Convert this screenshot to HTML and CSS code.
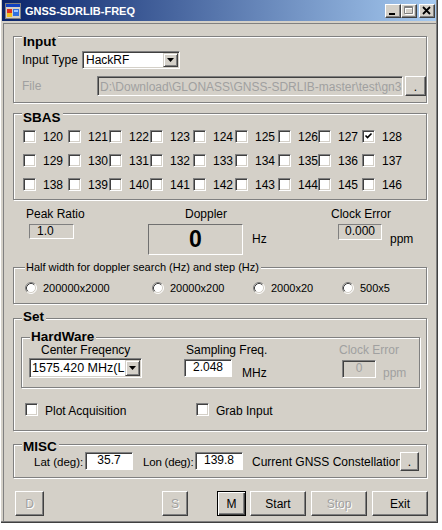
FILE: index.html
```html
<!DOCTYPE html>
<html>
<head>
<meta charset="utf-8">
<title>GNSS-SDRLIB-FREQ</title>
<link rel="stylesheet" href="styles.css">
</head>
<body>
<div class="window">
  <div class="titlebar">
    <svg class="appicon" width="16" height="16" viewBox="0 0 16 16">
      <rect x="0.5" y="0.5" width="15" height="15" fill="#d4d0c8" stroke="#808080"/>
      <rect x="1" y="1" width="14" height="3" fill="#1040c0"/>
      <rect x="2" y="6" width="5" height="4" fill="#e03020"/>
      <rect x="2" y="10" width="5" height="4" fill="#f0c020"/>
      <rect x="8" y="6" width="6" height="7" fill="#3070e0"/>
      <rect x="9" y="7" width="4" height="2" fill="#a0c8ff"/>
    </svg>
    <span class="title">GNSS-SDRLIB-FREQ</span>
    <span class="capbtns">
      <span class="capbtn"><svg width="14" height="12" viewBox="0 0 14 12"><rect x="3" y="8" width="6" height="2" fill="#000"/></svg></span>
      <span class="capbtn"><svg width="14" height="12" viewBox="0 0 14 12"><path d="M3.5 2.5h8v7h-8zM3.5 3.5h8" fill="none" stroke="#fff"/><path d="M2.5 1.5h8v7h-8zM2.5 2.5h8" fill="none" stroke="#808080"/></svg></span>
      <span class="capbtn close"><svg width="14" height="12" viewBox="0 0 14 12"><path d="M3 2l7 7M10 2l-7 7" stroke="#000" stroke-width="1.8"/></svg></span>
    </span>
  </div>

  <div class="client">
    <div class="group g-input">
      <span class="gtitle">Input</span>
      <div class="row r-type">
        <span class="l-type">Input Type</span>
        <div class="combo c-type"><span class="val">HackRF</span><span class="dd"><svg width="7" height="4" viewBox="0 0 7 4"><path d="M0 0h7L3.5 4z" fill="#000"/></svg></span></div>
      </div>
      <div class="row r-file">
        <span class="l-file dis">File</span>
        <div class="tb-file dis">D:\Download\GLONASS\GNSS-SDRLIB-master\test\gn3</div>
        <span class="btn btn-dots">.</span>
      </div>
    </div>

    <div class="group g-sbas">
      <span class="gtitle">SBAS</span>
      <div class="sbas">
        <label class="chk"><span class="cb"></span><span class="t">120</span></label>
        <label class="chk"><span class="cb"></span><span class="t">121</span></label>
        <label class="chk"><span class="cb"></span><span class="t">122</span></label>
        <label class="chk"><span class="cb"></span><span class="t">123</span></label>
        <label class="chk"><span class="cb"></span><span class="t">124</span></label>
        <label class="chk"><span class="cb"></span><span class="t">125</span></label>
        <label class="chk"><span class="cb"></span><span class="t">126</span></label>
        <label class="chk"><span class="cb"></span><span class="t">127</span></label>
        <label class="chk"><span class="cb"><svg width="9" height="9" viewBox="0 0 9 9"><path d="M1.5 3.5l2 2 4-4" fill="none" stroke="#000" stroke-width="1.6"/></svg></span><span class="t">128</span></label>
        <label class="chk"><span class="cb"></span><span class="t">129</span></label>
        <label class="chk"><span class="cb"></span><span class="t">130</span></label>
        <label class="chk"><span class="cb"></span><span class="t">131</span></label>
        <label class="chk"><span class="cb"></span><span class="t">132</span></label>
        <label class="chk"><span class="cb"></span><span class="t">133</span></label>
        <label class="chk"><span class="cb"></span><span class="t">134</span></label>
        <label class="chk"><span class="cb"></span><span class="t">135</span></label>
        <label class="chk"><span class="cb"></span><span class="t">136</span></label>
        <label class="chk"><span class="cb"></span><span class="t">137</span></label>
        <label class="chk"><span class="cb"></span><span class="t">138</span></label>
        <label class="chk"><span class="cb"></span><span class="t">139</span></label>
        <label class="chk"><span class="cb"></span><span class="t">140</span></label>
        <label class="chk"><span class="cb"></span><span class="t">141</span></label>
        <label class="chk"><span class="cb"></span><span class="t">142</span></label>
        <label class="chk"><span class="cb"></span><span class="t">143</span></label>
        <label class="chk"><span class="cb"></span><span class="t">144</span></label>
        <label class="chk"><span class="cb"></span><span class="t">145</span></label>
        <label class="chk"><span class="cb"></span><span class="t">146</span></label>
      </div>
    </div>

    <div class="meas">
      <div class="m-labels">
        <span class="ml-peak">Peak Ratio</span>
        <span class="ml-dop">Doppler</span>
        <span>Clock Error</span>
      </div>
      <div class="m-boxes">
        <span class="vbox vb-peak">1.0</span>
        <span class="vbox vb-dop">0</span>
        <span class="u-hz">Hz</span>
        <span class="vbox vb-clk">0.000</span>
        <span class="u-ppm">ppm</span>
      </div>
    </div>

    <div class="group g-half">
      <span class="gtitle small">Half width for doppler search (Hz) and step (Hz)</span>
      <div class="radios">
        <label class="rad r1"><svg class="rb" width="12" height="12" viewBox="0 0 12 12"><circle cx="6" cy="6" r="5" fill="#fff"/><path d="M2.11 9.89A5.5 5.5 0 0 1 9.89 2.11" fill="none" stroke="#808080"/><path d="M2.82 9.18A4.5 4.5 0 0 1 9.18 2.82" fill="none" stroke="#404040"/><path d="M9.89 2.11A5.5 5.5 0 0 1 2.11 9.89" fill="none" stroke="#fff"/><path d="M9.18 2.82A4.5 4.5 0 0 1 2.82 9.18" fill="none" stroke="#d4d0c8"/></svg><span class="t">200000x2000</span></label>
        <label class="rad r2"><svg class="rb" width="12" height="12" viewBox="0 0 12 12"><circle cx="6" cy="6" r="5" fill="#fff"/><path d="M2.11 9.89A5.5 5.5 0 0 1 9.89 2.11" fill="none" stroke="#808080"/><path d="M2.82 9.18A4.5 4.5 0 0 1 9.18 2.82" fill="none" stroke="#404040"/><path d="M9.89 2.11A5.5 5.5 0 0 1 2.11 9.89" fill="none" stroke="#fff"/><path d="M9.18 2.82A4.5 4.5 0 0 1 2.82 9.18" fill="none" stroke="#d4d0c8"/></svg><span class="t">20000x200</span></label>
        <label class="rad r3"><svg class="rb" width="12" height="12" viewBox="0 0 12 12"><circle cx="6" cy="6" r="5" fill="#fff"/><path d="M2.11 9.89A5.5 5.5 0 0 1 9.89 2.11" fill="none" stroke="#808080"/><path d="M2.82 9.18A4.5 4.5 0 0 1 9.18 2.82" fill="none" stroke="#404040"/><path d="M9.89 2.11A5.5 5.5 0 0 1 2.11 9.89" fill="none" stroke="#fff"/><path d="M9.18 2.82A4.5 4.5 0 0 1 2.82 9.18" fill="none" stroke="#d4d0c8"/></svg><span class="t">2000x20</span></label>
        <label class="rad"><svg class="rb" width="12" height="12" viewBox="0 0 12 12"><circle cx="6" cy="6" r="5" fill="#fff"/><path d="M2.11 9.89A5.5 5.5 0 0 1 9.89 2.11" fill="none" stroke="#808080"/><path d="M2.82 9.18A4.5 4.5 0 0 1 9.18 2.82" fill="none" stroke="#404040"/><path d="M9.89 2.11A5.5 5.5 0 0 1 2.11 9.89" fill="none" stroke="#fff"/><path d="M9.18 2.82A4.5 4.5 0 0 1 2.82 9.18" fill="none" stroke="#d4d0c8"/></svg><span class="t">500x5</span></label>
      </div>
    </div>

    <div class="group g-set">
      <span class="gtitle">Set</span>
      <div class="group g-hw">
        <span class="gtitle">HardWare</span>
        <div class="hw-labels">
          <span class="hl-freq">Center Freqency</span>
          <span class="hl-samp">Sampling Freq.</span>
          <span class="dis">Clock Error</span>
        </div>
        <div class="hw-ctrls">
          <div class="combo c-freq"><span class="val">1575.420 MHz(L</span><span class="dd"><svg width="7" height="4" viewBox="0 0 7 4"><path d="M0 0h7L3.5 4z" fill="#000"/></svg></span></div>
          <span class="tb tb-samp">2.048</span>
          <span class="u-mhz">MHz</span>
          <span class="tb tb-clk dis">0</span>
          <span class="u-ppm2 dis">ppm</span>
        </div>
      </div>
      <div class="plot-row">
        <label class="chk c-plot"><span class="cb"></span><span class="t">Plot Acquisition</span></label>
        <label class="chk"><span class="cb"></span><span class="t">Grab Input</span></label>
      </div>
    </div>

    <div class="group g-misc">
      <span class="gtitle">MISC</span>
      <div class="misc-row">
        <span class="m-lat">Lat (deg):</span>
        <span class="tb tb-lat">35.7</span>
        <span class="m-lon">Lon (deg):</span>
        <span class="tb tb-lon">139.8</span>
        <span class="m-cur">Current GNSS Constellation</span>
        <span class="btn btn-const">.</span>
      </div>
    </div>

    <div class="btnrow">
      <span class="btn b-d disabled">D</span>
      <span class="btn b-s disabled">S</span>
      <span class="btn b-m def">M</span>
      <span class="btn b-wide b-start">Start</span>
      <span class="btn b-wide b-next disabled">Stop</span>
      <span class="btn b-wide b-next">Exit</span>
    </div>
  </div>
</div>
</body>
</html>
```

FILE: styles.css
```css
* { box-sizing: border-box; margin: 0; padding: 0; }

body {
  margin: 0;
  background: #fff;
  font-family: "Liberation Sans", Arial, sans-serif;
  font-size: 12px;
  line-height: 14px;
  color: #000;
}

.window {
  width: 438px;
  height: 523px;
  background: #d4d0c8;
  padding: 0 2px 2px 2px;
  box-shadow: inset 1px 0 0 #fff, inset -1px -1px 0 #404040, inset -2px -2px 0 #808080;
  display: flex;
  flex-direction: column;
  white-space: nowrap;
}

/* title bar */
.titlebar {
  height: 21px;
  flex: none;
  display: flex;
  align-items: center;
  padding: 0 1px 0 3px;
  background: linear-gradient(90deg, #0a246a 0%, #a6caf0 100%);
}
.appicon { flex: none; }
.title {
  flex: 1;
  margin-left: 4px;
  color: #fff;
  font-weight: bold;
  font-size: 11px;
}
.capbtns { display: flex; }
.capbtn {
  width: 16px;
  height: 14px;
  background: #d4d0c8;
  border: 1px solid;
  border-color: #fff #404040 #404040 #fff;
  box-shadow: inset -1px -1px 0 #808080;
  display: flex;
}
.capbtn.close { margin-left: 2px; }

/* client area */
.client {
  flex: 1;
  margin: 2px 0 0 1px;
  border-top: 1px solid #808080;
  border-left: 1px solid #808080;
  padding-left: 9px;
  display: flex;
  flex-direction: column;
  align-items: flex-start;
}

.dis { color: #a0a0a0; }

.group {
  position: relative;
  flex: none;
  width: 414px;
  border: 1px solid #808080;
  box-shadow: inset 1px 1px 0 #fff, 1px 1px 0 #fff;
}
.gtitle {
  position: absolute;
  left: 8px;
  top: -6px;
  padding: 0 2px 0 1px;
  background: #d4d0c8;
  font-weight: bold;
  font-size: 13.5px;
  line-height: 15px;
}
.g-input > .gtitle { top: -3px; }
.g-sbas > .gtitle { top: -4px; }
.g-set > .gtitle { top: -10px; }
.g-hw > .gtitle { top: -9px; }
.g-misc > .gtitle { top: -6px; }
.gtitle.small {
  left: 11px;
  top: -7px;
  font-weight: normal;
  font-size: 11px;
  line-height: 13px;
}

.row { display: flex; align-items: center; }

/* input */
.g-input { margin-top: 12px; height: 67px; padding: 14px 0 0 8px; }
.r-type { height: 18px; }
.r-file { height: 20px; margin-top: 7px; }
.l-type { width: 60px; }
.l-file { width: 75px; }

.combo {
  display: flex;
  align-items: center;
  background: #fff;
  border: 1px solid;
  border-color: #808080 #fff #fff #808080;
  box-shadow: inset 1px 1px 0 #404040, inset -1px -1px 0 #d4d0c8;
}
.combo .val { flex: 1; overflow: hidden; padding-left: 3px; }
.c-type { width: 98px; height: 18px; }
.dd {
  flex: none;
  width: 15px;
  height: 14px;
  margin-right: 1px;
  background: #d4d0c8;
  border: 1px solid;
  border-color: #d4d0c8 #404040 #404040 #d4d0c8;
  box-shadow: inset 1px 1px 0 #fff, inset -1px -1px 0 #808080;
  display: flex;
  align-items: center;
  justify-content: center;
}

.tb-file {
  width: 306px;
  height: 20px;
  background: #d4d0c8;
  border: 1px solid;
  border-color: #808080 #fff #fff #808080;
  box-shadow: inset 1px 1px 0 #404040;
  padding: 3px 0 0 2px;
  overflow: hidden;
}

.btn {
  display: flex;
  align-items: center;
  justify-content: center;
  background: #d4d0c8;
  border: 1px solid;
  border-color: #fff #404040 #404040 #fff;
  box-shadow: inset -1px -1px 0 #808080;
  flex: none;
}
.btn.disabled { color: #a0a0a0; text-shadow: 1px 1px 0 #fff; }
.btn.def {
  border-color: #000;
  box-shadow: inset 1px 1px 0 #fff, inset -1px -1px 0 #404040, inset -2px -2px 0 #808080;
}
.btn-dots {
  width: 21px;
  height: 20px;
  margin-left: 2px;
  align-items: flex-end;
  padding-bottom: 1px;
}

/* sbas */
.g-sbas { margin-top: 10px; height: 87px; }
.sbas {
  display: grid;
  grid-template-columns: 45px 41px 41px 43px 42px 43px 40px 44px 40px;
  row-gap: 11px;
  padding: 16px 0 0 9px;
}
.chk {
  display: flex;
  align-items: center;
  height: 13px;
}
.chk .t { margin-left: 7px; }
.cb {
  flex: none;
  width: 13px;
  height: 13px;
  background: #fff;
  border: 1px solid;
  border-color: #808080 #fff #fff #808080;
  box-shadow: inset 1px 1px 0 #404040, inset -1px -1px 0 #d4d0c8;
  display: flex;
  align-items: center;
  justify-content: center;
}

/* measurements */
.meas { flex: none; width: 414px; height: 67px; padding-top: 7px; }
.m-labels { display: flex; height: 14px; }
.ml-peak { margin-left: 13px; width: 159px; }
.ml-dop { width: 146px; }
.m-boxes { display: flex; align-items: flex-start; margin-top: 3px; }
.vbox {
  display: block;
  border: 1px solid;
  border-color: #808080 #fff #fff #808080;
  line-height: 13px;
}
.vb-peak { margin-left: 16px; width: 45px; height: 15px; padding-left: 7px; }
.vb-dop {
  margin-left: 74px;
  width: 95px;
  height: 31px;
  font-size: 23px;
  font-weight: bold;
  line-height: 29px;
  text-align: center;
  border-color: #707070 #fff #fff #707070;
}
.u-hz { margin: 8px 0 0 9px; width: 15px; }
.vb-clk { margin-left: 71px; width: 44px; height: 16px; text-align: center; }
.u-ppm { margin: 8px 0 0 8px; }

/* half width */
.g-half { height: 37px; }
.radios {
  display: flex;
  align-items: center;
  padding: 14px 0 0 11px;
  font-size: 11px;
}
.rad { display: flex; align-items: center; height: 12px; }
.rad .rb { flex: none; }
.rad .t { margin-left: 6px; }
.r1 { width: 127px; }
.r2 { width: 101px; }
.r3 { width: 89px; }

/* set */
.g-set { margin-top: 14px; height: 113px; padding: 18px 0 0 7px; }
.g-hw { width: 399px; height: 51px; padding-top: 5px; }
.hw-labels { display: flex; height: 14px; }
.hl-freq { margin-left: 19px; width: 145px; }
.hl-samp { width: 153px; }
.hw-ctrls { display: flex; align-items: flex-start; margin-top: 1px; }
.c-freq { margin-left: 7px; width: 113px; height: 20px; }
.c-freq .val { padding-left: 2px; font-size: 12.5px; }
.c-freq .dd { height: 16px; }
.tb {
  display: block;
  height: 18px;
  background: #fff;
  border: 1px solid;
  border-color: #808080 #fff #fff #808080;
  box-shadow: inset 1px 1px 0 #404040;
  text-align: center;
  line-height: 15px;
}
.tb-samp { margin: 1px 0 0 42px; width: 48px; }
.u-mhz { margin: 8px 0 0 10px; width: 26px; }
.tb-clk { margin: 2px 0 0 74px; width: 34px; background: #d4d0c8; }
.u-ppm2 { margin: 8px 0 0 7px; }
.plot-row { display: flex; margin: 15px 0 0 4px; }
.c-plot { width: 171px; }
.plot-row .t { padding-top: 2px; }

/* misc */
.g-misc { margin-top: 13px; height: 34px; padding: 7px 0 0 20px; }
.misc-row { display: flex; align-items: center; height: 18px; }
.misc-row > span:not(.tb):not(.btn) { padding-top: 2px; }
.m-lat { width: 51px; font-size: 11.5px; }
.tb-lat { width: 48px; }
.m-lon { margin-left: 10px; width: 52px; font-size: 11.5px; letter-spacing: -0.2px; }
.tb-lon { width: 48px; }
.m-cur { margin-left: 9px; width: 148px; }
.btn-const { width: 19px; height: 19px; align-items: flex-end; padding-bottom: 1px; }

/* bottom buttons */
.btnrow { display: flex; margin: 13px 0 0 2px; }
.btnrow .btn { height: 25px; }
.b-d { width: 29px; }
.b-s { width: 26px; margin-left: 118px; }
.b-m { width: 29px; margin-left: 29px; }
.b-wide { width: 56px; }
.b-start { margin-left: 4px; }
.b-next { margin-left: 5px; }
```
